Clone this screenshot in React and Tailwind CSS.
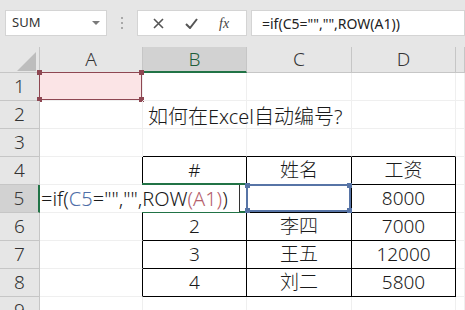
import React from 'react';

const FONT = { fontFamily: '"Noto Sans", "Noto Sans CJK SC", sans-serif' };

const COLS = ['A', 'B', 'C', 'D', ''];
const WIDTHS = ['w-[103px]', 'w-[104px]', 'w-[105px]', 'w-[104px]', 'flex-1'];

// table contents for rows 4-8, columns B-D
const TABLE = {
  4: ['#', '姓名', '工资'],
  5: ['', '', '8000'],
  6: ['2', '李四', '7000'],
  7: ['3', '王五', '12000'],
  8: ['4', '刘二', '5800'],
};

function Handles({ color }) {
  return (
    <>
      <span className={`absolute -left-[3px] -top-[3px] w-[5px] h-[5px] ${color}`}></span>
      <span className={`absolute -right-[3px] -top-[3px] w-[5px] h-[5px] ${color}`}></span>
      <span className={`absolute -left-[3px] -bottom-[3px] w-[5px] h-[5px] ${color}`}></span>
      <span className={`absolute -right-[3px] -bottom-[3px] w-[5px] h-[5px] ${color}`}></span>
    </>
  );
}

function Cell({ row, col }) {
  const inTable = row >= 4 && row <= 8 && col >= 1 && col <= 3;
  const rightBlack = (row >= 4 && row <= 8 && col >= 0 && col <= 3);
  const bottomBlack = (row >= 3 && row <= 8 && col >= 1 && col <= 3);
  const text = inTable ? TABLE[row][col - 1] : '';

  return (
    <div
      className={`relative h-full ${WIDTHS[col]} border-r border-b flex items-center justify-center text-[19px] font-light text-[#1a1a1a] ${
        rightBlack ? 'border-r-black' : 'border-r-[#efefef]'
      } ${bottomBlack ? 'border-b-black' : 'border-b-[#efefef]'}`}
    >
      {text}
      {row === 1 && col === 0 && (
        <div className="absolute -left-[1px] -top-[1px] right-0 bottom-0 bg-[#fbe4e6] border border-[#8e4752]">
          <Handles color="bg-[#8e4752]" />
        </div>
      )}
      {row === 5 && col === 2 && (
        <div className="absolute -left-[1px] -top-[1px] right-0 bottom-0 border-2 border-[#5774a6]">
          <Handles color="bg-[#5774a6]" />
        </div>
      )}
      {row === 5 && col === 1 && (
        <div className="absolute -left-[1px] -top-[2px] right-0 -bottom-[1px] border-y-2 border-[#217346]"></div>
      )}
      {row === 2 && col === 1 && (
        <span className="absolute left-[5px] top-[1px] whitespace-nowrap text-[20px]">如何在Excel自动编号?</span>
      )}
    </div>
  );
}

export default function App() {
  const rows = [1, 2, 3, 4, 5, 6, 7, 8, 9];

  return (
    <div className="w-[465px] h-[310px] overflow-hidden bg-white" style={FONT}>
      {/* ribbon: name box + formula bar */}
      <div className="h-[47px] bg-[#e6e6e6] flex items-start pt-[10px]">
        <div className="ml-[5px] w-[102px] h-[26px] bg-white border border-[#d4d4d4] flex items-center justify-between pl-[6px] pr-[6px]">
          <span className="text-[13px] text-[#333]">SUM</span>
          <svg width="8" height="5" viewBox="0 0 8 5">
            <polygon points="0,0 8,0 4,4" fill="#7a7a7a" />
          </svg>
        </div>
        <div className="w-[30px] h-[26px] flex flex-col items-center justify-center gap-[3px]">
          <span className="w-[2px] h-[2px] bg-[#a8a8a8]"></span>
          <span className="w-[2px] h-[2px] bg-[#a8a8a8]"></span>
          <span className="w-[2px] h-[2px] bg-[#a8a8a8]"></span>
        </div>
        <div className="w-[110px] h-[26px] bg-white border border-[#d4d4d4] flex items-center pl-[15px] gap-[21px]">
          <svg width="11" height="11" viewBox="0 0 11 11">
            <path d="M1 1 L10 10 M10 1 L1 10" stroke="#555" strokeWidth="1.6" />
          </svg>
          <svg width="13" height="11" viewBox="0 0 13 11">
            <path d="M1 6 L5 10 L12 1" stroke="#555" strokeWidth="2" fill="none" />
          </svg>
          <span className="text-[14px] italic text-[#444]" style={{ fontFamily: '"Liberation Serif", serif' }}>fx</span>
        </div>
        <div className="ml-[4px] flex-1 h-[26px] bg-white border border-[#d4d4d4] flex items-center pl-[10px]">
          <span className="text-[14px] text-[#222]">=if(C5="","",ROW(A1))</span>
        </div>
      </div>

      {/* column headers */}
      <div className="flex h-[26px] bg-[#e6e6e6]">
        <div className="relative w-[40px] h-full border-r border-b border-[#c6c6c6]">
          <svg className="absolute left-0 top-0" width="40" height="26" viewBox="0 0 40 26">
            <polygon points="36,5 36,24 17,24" fill="#bdbdbd" />
          </svg>
        </div>
        {COLS.map((c, i) => (
          <div
            key={i}
            className={`h-full ${WIDTHS[i]} flex items-center justify-center text-[19px] font-light border-r border-[#c6c6c6] ${
              c === 'B' ? 'bg-[#d2d2d2] border-b-2 border-b-[#217346] text-[#1e5e3a]' : 'border-b text-[#333]'
            }`}
          >
            {c}
          </div>
        ))}
      </div>

      {/* grid rows */}
      {rows.map((r) => (
        <div key={r} className="relative flex h-[28px]">
          <div
            className={`w-[40px] h-full flex items-center justify-center text-[19px] font-light border-b border-[#c6c6c6] ${
              r === 5 ? 'bg-[#d2d2d2] border-r-2 border-r-[#217346] text-[#3a3a3a]' : 'bg-[#e6e6e6] border-r text-[#333]'
            }`}
          >
            {r}
          </div>
          {COLS.map((_, i) => (
            <Cell key={i} row={r} col={i} />
          ))}
          {r === 5 && (
            <div className="absolute left-[40px] top-0 w-[200px] h-[27px] bg-white border-r border-[#333] flex items-center pl-[1px] text-[20px] font-light text-[#1a1a1a] whitespace-nowrap">
              =if(<span className="text-[#4f6fa8]">C5</span>="","",ROW<span className="text-[#b5606c]">(A1)</span>)
            </div>
          )}
        </div>
      ))}
    </div>
  );
}
